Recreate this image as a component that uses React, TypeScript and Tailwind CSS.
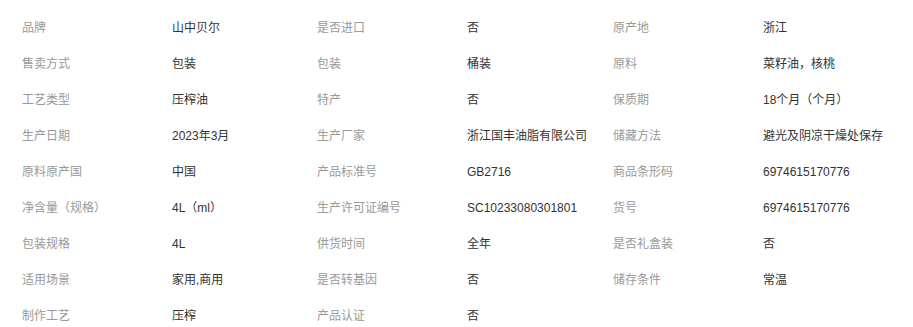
import React from 'react'

const rows: [string, string, string, string, string, string][] = [
  ['品牌', '山中贝尔', '是否进口', '否', '原产地', '浙江'],
  ['售卖方式', '包装', '包装', '桶装', '原料', '菜籽油，核桃'],
  ['工艺类型', '压榨油', '特产', '否', '保质期', '18个月（个月）'],
  ['生产日期', '2023年3月', '生产厂家', '浙江国丰油脂有限公司', '储藏方法', '避光及阴凉干燥处保存'],
  ['原料原产国', '中国', '产品标准号', 'GB2716', '商品条形码', '6974615170776'],
  ['净含量（规格）', '4L（ml）', '生产许可证编号', 'SC10233080301801', '货号', '6974615170776'],
  ['包装规格', '4L', '供货时间', '全年', '是否礼盒装', '否'],
  ['适用场景', '家用,商用', '是否转基因', '否', '储存条件', '常温'],
  ['制作工艺', '压榨', '产品认证', '否', '', ''],
]

export default function App() {
  return (
    <div
      className="w-[913px] h-[327px] overflow-hidden bg-white pt-[10px] pl-[22px] text-[12px]"
      style={{ fontFamily: '"Liberation Sans", "Noto Sans CJK SC", sans-serif' }}
    >
      {rows.map((r, i) => (
        <div key={i} className="flex h-9 items-center">
          <div className="w-[150px] text-[#999]">{r[0]}</div>
          <div className="w-[145px] text-[#333]">{r[1]}</div>
          <div className="w-[150px] text-[#999]">{r[2]}</div>
          <div className="w-[146px] text-[#333]">{r[3]}</div>
          <div className="w-[150px] text-[#999]">{r[4]}</div>
          <div className="text-[#333]">{r[5]}</div>
        </div>
      ))}
    </div>
  )
}
